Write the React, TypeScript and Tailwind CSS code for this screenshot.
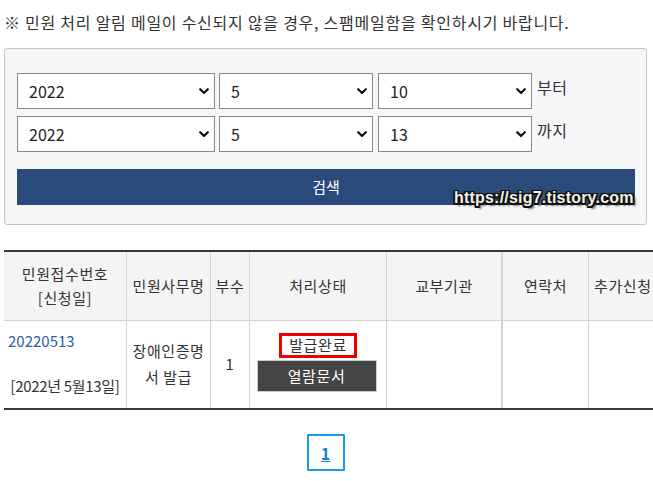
import React from "react";

const font = { fontFamily: '"Noto Sans CJK KR", "Noto Sans", sans-serif' };

function Chevron() {
  return (
    <svg width="10" height="7" viewBox="0 0 10 7" className="shrink-0">
      <path d="M1.2 1.2 L5 5 L8.8 1.2" fill="none" stroke="#111" strokeWidth="2.2" strokeLinecap="round" strokeLinejoin="round" />
    </svg>
  );
}

function Sel({ value, w }: { value: string; w: string }) {
  return (
    <div className={`${w} h-[36px] bg-white border border-[#8a8a8a] flex items-center justify-between pl-[11px] pr-[5px] text-[16px] text-[#222]`}>
      <span>{value}</span>
      <Chevron />
    </div>
  );
}

export default function App() {
  return (
    <div className="w-[653px] h-[481px] bg-white overflow-hidden text-[#333]" style={font}>
      <div className="pl-[4px] pt-[10px] text-[16px] leading-[24px] text-[#333] tracking-[0.75px] whitespace-nowrap">
        ※ 민원 처리 알림 메일이 수신되지 않을 경우, 스팸메일함을 확인하시기 바랍니다.
      </div>
      <div className="relative ml-[4px] mt-[14px] w-[643px] h-[177px] border border-[#c4c4c4] rounded-[3px] bg-[#f6f6f8] pl-[12px] pr-[11px] pt-[24px]">
        <div className="flex items-center">
          <Sel value="2022" w="w-[198px]" />
          <div className="w-[4px]" />
          <Sel value="5" w="w-[154px]" />
          <div className="w-[5px]" />
          <Sel value="10" w="w-[154px]" />
          <span className="ml-[5px] text-[16px] -mt-[8px] tracking-[0.5px]">부터</span>
        </div>
        <div className="flex items-center mt-[7px]">
          <Sel value="2022" w="w-[198px]" />
          <div className="w-[4px]" />
          <Sel value="5" w="w-[154px]" />
          <div className="w-[5px]" />
          <Sel value="13" w="w-[154px]" />
          <span className="ml-[5px] text-[16px] -mt-[8px] tracking-[0.5px]">까지</span>
        </div>
        <div className="mt-[17px] h-[36px] bg-[#2a4a7c] text-white text-[15px] flex items-center justify-center">
          검색
        </div>
        <div
          className="absolute left-[449px] top-[139px] text-[16px] leading-[20px] font-bold text-[#eef2e6] tracking-[0.2px] whitespace-nowrap"
          style={{
            fontFamily: '"Liberation Sans", sans-serif',
            textShadow:
              "-1.5px -1.5px 0 #111, 1.5px -1.5px 0 #111, -1.5px 1.5px 0 #111, 1.5px 1.5px 0 #111, 0 1.5px 0 #111, 0 -1.5px 0 #111, 1.5px 0 0 #111, -1.5px 0 0 #111, 3px 3px 2px #666",
          }}
        >
          https://sig7.tistory.com
        </div>
      </div>

      <div className="mt-[25px] ml-[4px] w-[700px] border-t-2 border-b-2 border-[#3a3a3a] text-[15px] tracking-[0.6px]">
        <div className="flex bg-[#f4f4f4] h-[69px] border-b border-[#d4d4d4]">
          <div className="w-[123px] flex flex-col items-center justify-center leading-[24px] border-r border-[#d4d4d4]">
            <span>민원접수번호</span>
            <span>[신청일]</span>
          </div>
          <div className="w-[84px] flex items-center justify-center border-r border-[#d4d4d4] whitespace-nowrap">민원사무명</div>
          <div className="w-[39px] flex items-center justify-center border-r border-[#d4d4d4]">부수</div>
          <div className="w-[137px] flex items-center justify-center border-r border-[#d4d4d4]">처리상태</div>
          <div className="w-[116px] flex items-center justify-center border-r-2 border-[#d4d4d4]">교부기관</div>
          <div className="w-[86px] flex items-center justify-center border-r border-[#d4d4d4]">연락처</div>
          <div className="w-[100px] flex items-center pl-[5px] whitespace-nowrap">추가신청</div>
        </div>
        <div className="flex h-[87px]">
          <div className="w-[123px] flex flex-col border-r border-[#d4d4d4] pt-[9px]">
            <span className="pl-[4px] text-[#2a5ea5] leading-[22px] tracking-[0px]">20220513</span>
            <span className="text-center mt-[23px] leading-[22px] tracking-[-0.3px] whitespace-nowrap">[2022년 5월13일]</span>
          </div>
          <div className="w-[84px] flex flex-col items-center justify-center leading-[26px] border-r border-[#d4d4d4] pb-[2px] whitespace-nowrap">
            <span>장애인증명</span>
            <span>서 발급</span>
          </div>
          <div className="w-[39px] flex items-center justify-center border-r border-[#d4d4d4]">1</div>
          <div className="w-[137px] flex flex-col items-center border-r border-[#d4d4d4] pt-[12px]">
            <div className="w-[78px] h-[25px] border-[3px] border-[#ee0000] flex items-center justify-center text-[15px]">
              발급완료
            </div>
            <div className="mt-[2px] w-[120px] h-[32px] bg-[#444] border border-[#ccc] text-white flex items-center justify-center text-[15px] ml-[-3px]">
              열람문서
            </div>
          </div>
          <div className="w-[116px] border-r-2 border-[#d4d4d4]" />
          <div className="w-[86px] border-r border-[#d4d4d4]" />
          <div className="w-[100px]" />
        </div>
      </div>

      <div className="flex justify-center mt-[24px] pr-[2px]">
        <div className="w-[38px] h-[37px] border-2 border-[#1a9ae6] flex items-center justify-center text-[#1a7fd0] font-bold underline text-[16px] rounded-[1px]">
          1
        </div>
      </div>
    </div>
  );
}
